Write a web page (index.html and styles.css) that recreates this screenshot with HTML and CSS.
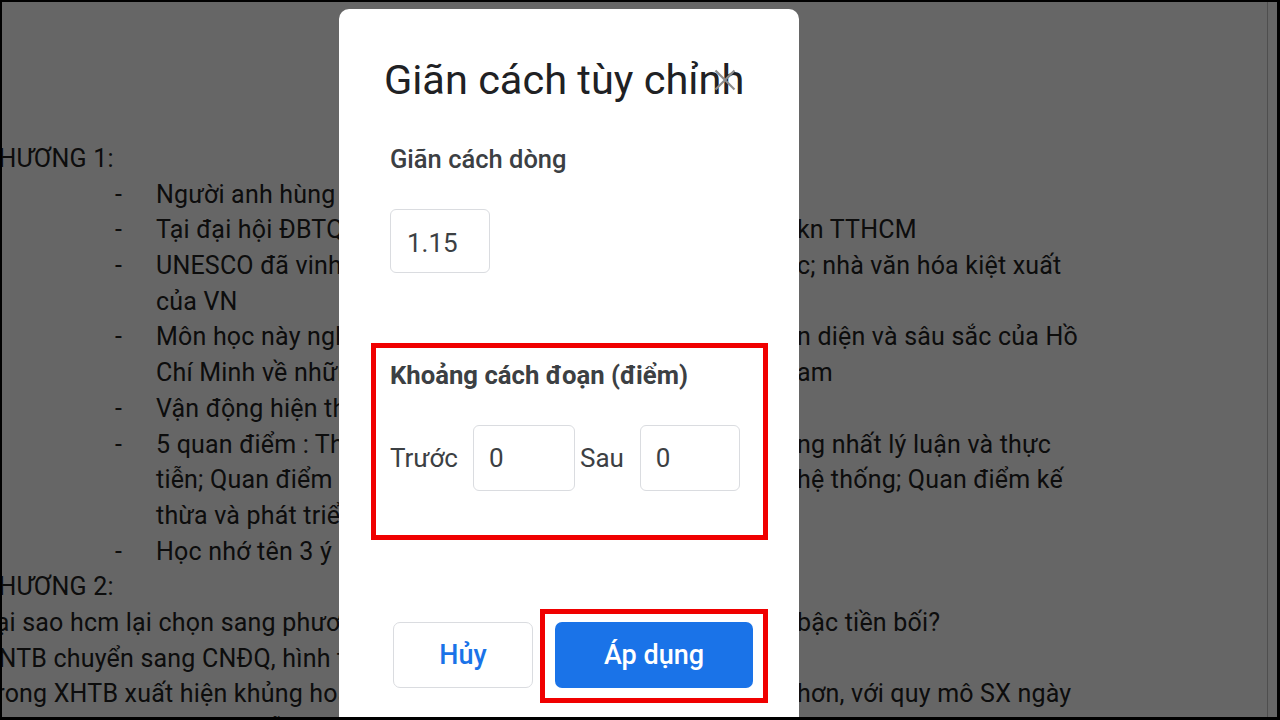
FILE: index.html
```html
<!DOCTYPE html>
<html lang="vi">
<head>
<meta charset="utf-8">
<title>Giãn cách tùy chỉnh</title>
<link rel="stylesheet" href="styles.css">
</head>
<body>
<div class="screen">
  <div class="doc">
    <div class="page">
      <div class="line"><div class="l">CHƯƠNG 1:</div><div class="r"></div></div>
      <div class="line"><div class="l"><span class="dash">-</span>Người anh hùng giải phóng dân tộc vĩ đại</div><div class="r"></div></div>
      <div class="line"><div class="l"><span class="dash">-</span>Tại đại hội ĐBTQ lần thứ VII Đảng chính thức đưa ra kxkn TTHCM</div><div class="r">kn TTHCM</div></div>
      <div class="line"><div class="l"><span class="dash">-</span>UNESCO đã vinh danh là anh hùng giải phóng dân tộc</div><div class="r">c; nhà văn hóa kiệt xuất</div></div>
      <div class="line"><div class="l"><span class="cont"></span>của VN</div><div class="r"></div></div>
      <div class="line"><div class="l"><span class="dash">-</span>Môn học này nghiên cứu hệ thống quan điểm toàn</div><div class="r">n diện và sâu sắc của Hồ</div></div>
      <div class="line"><div class="l"><span class="cont"></span>Chí Minh về những vấn đề cơ bản của cách mạng Việt Nam</div><div class="r">am</div></div>
      <div class="line"><div class="l"><span class="dash">-</span>Vận động hiện thực hóa tư tưởng Hồ Chí Minh</div><div class="r"></div></div>
      <div class="line"><div class="l"><span class="dash">-</span>5 quan điểm : Thống nhất tính đảng và tính khoa học; Thống</div><div class="r">ng nhất lý luận và thực</div></div>
      <div class="line"><div class="l"><span class="cont"></span>tiễn; Quan điểm lịch sử - cụ thể; Quan điểm toàn diện và</div><div class="r">hệ thống; Quan điểm kế</div></div>
      <div class="line"><div class="l"><span class="cont"></span>thừa và phát triển; Kết hợp nghiên cứu</div><div class="r"></div></div>
      <div class="line"><div class="l"><span class="dash">-</span>Học nhớ tên 3 ý nghĩa của việc học tập</div><div class="r"></div></div>
      <div class="line"><div class="l">CHƯƠNG 2:</div><div class="r"></div></div>
      <div class="line"><div class="l">Tại sao hcm lại chọn sang phương Tây mà không đi theo con đường các</div><div class="r">bậc tiền bối?</div></div>
      <div class="line"><div class="l">CNTB chuyển sang CNĐQ, hình thành hệ thống thuộc địa</div><div class="r"></div></div>
      <div class="line"><div class="l">Trong XHTB xuất hiện khủng hoảng kinh tế ngày càng nghiêm trọng</div><div class="r"> hơn, với quy mô SX ngày</div></div>
      <div class="line"><div class="l">càng mở rộng và mâu thuẫn giai cấp ngày càng gay gắt</div><div class="r">càng mở rộng</div></div>
    </div>
    <div class="scroll"></div>
  </div>
  <div class="overlay"></div>
  <div class="dialog">
    <svg class="close" width="24" height="24" viewBox="0 0 24 24"><path d="M2.5 2.5L21.5 21.5M21.5 2.5L2.5 21.5" stroke="#8c8c8c" stroke-width="2.2" fill="none"/></svg>
    <div class="title">Giãn cách tùy chỉnh</div>
    <div class="label1">Giãn cách dòng</div>
    <div class="field">1.15</div>
    <div class="para">
      <div class="label2">Khoảng cách đoạn (điểm)</div>
      <div class="row">
        <span class="txt">Trước</span>
        <div class="field small f1">0</div>
        <span class="txt sau">Sau</span>
        <div class="field small f2">0</div>
      </div>
    </div>
    <div class="actions">
      <div class="btn-cancel">Hủy</div>
      <div class="hl"><div class="btn-apply">Áp dụng</div></div>
    </div>
  </div>
</div>
</body>
</html>
```

FILE: styles.css
```css
body {
  margin: 0;
  background: #000;
}
.screen {
  position: relative;
  margin: 2px 3px 3px 2px;
  width: 1275px;
  height: 715px;
  overflow: hidden;
  background: #fff;
  font-family: Roboto, "Noto Sans", sans-serif;
}
.doc {
  display: flex;
  height: 100%;
}
.page {
  flex: 1;
  padding-top: 139px;
  color: #222;
  font-size: 25px;
  line-height: 35.7px;
  letter-spacing: 0.2px;
  overflow: hidden;
}
.scroll {
  width: 9px;
  border-left: 1px solid #c4c4c4;
}
.line {
  display: grid;
  grid-template-columns: 815px 1fr;
  margin-left: -20px;
  white-space: nowrap;
  height: 35.7px;
}
.l, .r {
  overflow: hidden;
}
.dash {
  display: inline-block;
  margin-left: 133px;
  width: 41px;
}
.cont {
  display: inline-block;
  width: 174px;
}
.overlay {
  position: absolute;
  inset: 0;
  background: rgba(0, 0, 0, 0.6);
}
.dialog {
  position: absolute;
  left: 337px;
  top: 7px;
  width: 460px;
  bottom: -30px;
  background: #fff;
  border-radius: 10px;
  padding: 47px 0 0 51px;
  box-sizing: border-box;
  color: #3c4043;
}
.close {
  position: absolute;
  left: 374px;
  top: 59px;
}
.title {
  margin-left: -6px;
  font-size: 41.5px;
  line-height: 48px;
  color: #202124;
  white-space: nowrap;
}
.label1 {
  margin-top: 40px;
  font-size: 25.5px;
  font-weight: 500;
  line-height: 30px;
}
.field {
  margin-top: 35px;
  width: 100px;
  height: 64px;
  box-sizing: border-box;
  border: 1px solid #dadce0;
  border-radius: 6px;
  padding: 3px 0 0 16px;
  display: flex;
  align-items: center;
  font-size: 26px;
}
.para {
  margin-top: 70px;
  margin-left: -19px;
  width: 397px;
  box-sizing: border-box;
  border: 5px solid #f00000;
  padding: 12px 0 44px 14px;
}
.label2 {
  font-size: 25.7px;
  font-weight: 700;
  line-height: 30px;
  white-space: nowrap;
}
.row {
  margin-top: 35px;
  display: flex;
  align-items: center;
  height: 66px;
}
.txt {
  font-size: 26px;
}
.field.small {
  margin-top: 0;
  height: 66px;
  padding: 0 0 0 15px;
}
.f1 {
  width: 102px;
  margin-left: 15px;
}
.sau {
  margin-left: 5px;
}
.f2 {
  width: 100px;
  margin-left: 16px;
}
.actions {
  margin-top: 69px;
  display: flex;
  align-items: flex-start;
}
.btn-cancel {
  margin-left: 3px;
  margin-top: 13px;
  width: 140px;
  height: 66px;
  box-sizing: border-box;
  border: 1px solid #dadce0;
  border-radius: 7px;
  color: #1a73e8;
  font-size: 27px;
  font-weight: 500;
  display: flex;
  align-items: center;
  justify-content: center;
}
.hl {
  margin-left: 7px;
  border: 5px solid #f00000;
  padding: 8px 10px 10px 10px;
}
.btn-apply {
  width: 198px;
  height: 66px;
  background: #1a73e8;
  color: #fff;
  border-radius: 7px;
  font-size: 27px;
  font-weight: 500;
  display: flex;
  align-items: center;
  justify-content: center;
}
```
